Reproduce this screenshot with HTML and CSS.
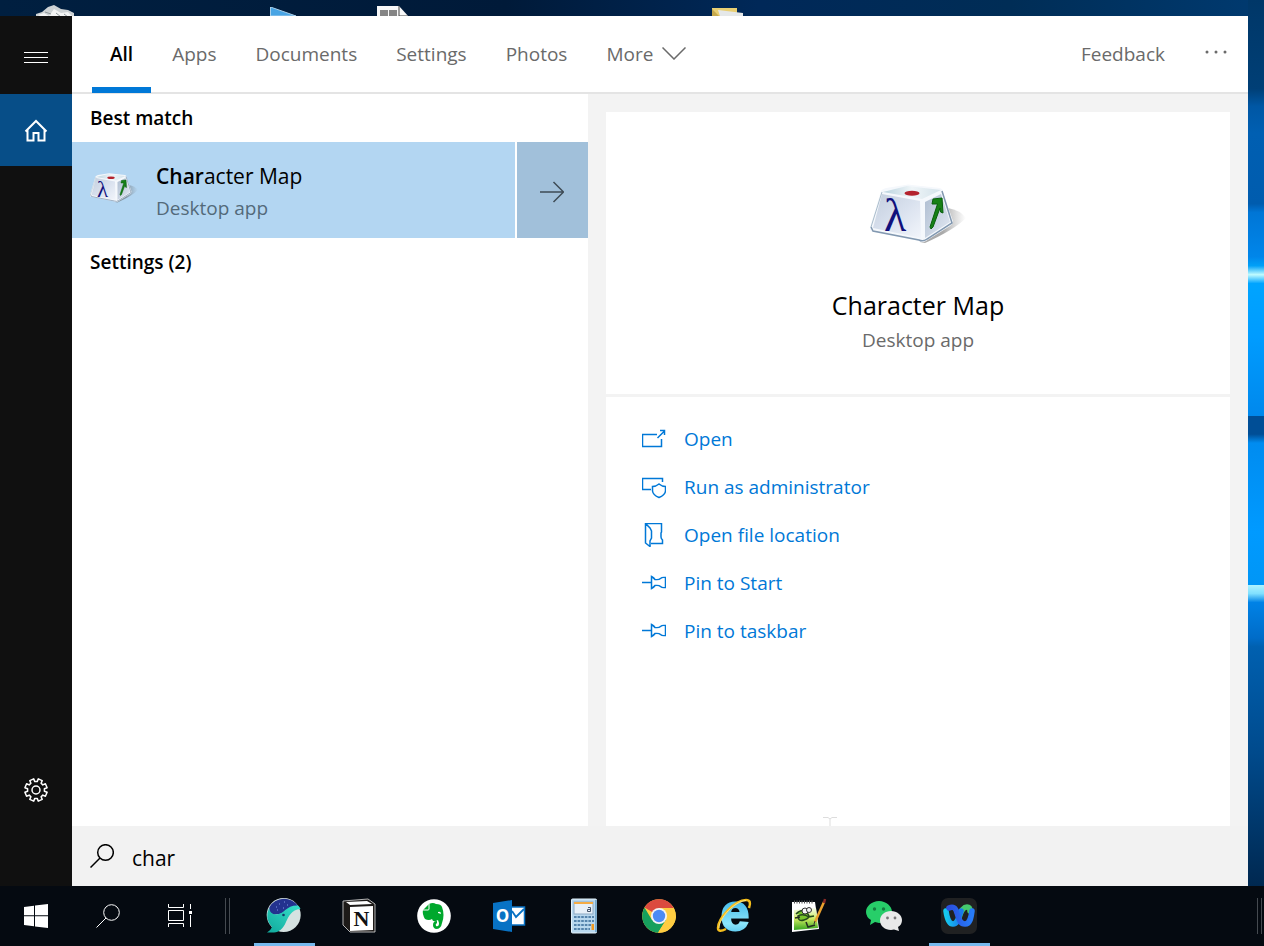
FILE: index.html
```
<!DOCTYPE html>
<html lang="en">
<head>
    <meta charset="UTF-8">
    <meta name="viewport" content="width=device-width, initial-scale=1.0">
    <title>Search</title>
    <link rel="stylesheet" href="styles.css">
</head>
<body>
    <!-- shared icons -->
    <svg class="sprite" width="0" height="0" aria-hidden="true">
        <defs>
            <linearGradient id="keyFront" x1="0" y1="0" x2="1" y2="1">
                <stop offset="0" stop-color="#c3cedd"/>
                <stop offset="0.5" stop-color="#d9e1ee"/>
                <stop offset="1" stop-color="#f2f5fb"/>
            </linearGradient>
            <linearGradient id="keySide" x1="0" y1="0" x2="1" y2="1">
                <stop offset="0" stop-color="#aebdd0"/>
                <stop offset="1" stop-color="#e4eaf4"/>
            </linearGradient>
            <linearGradient id="keyTop" x1="0" y1="0" x2="1" y2="0">
                <stop offset="0" stop-color="#b9d3de"/>
                <stop offset="0.5" stop-color="#eff5f8"/>
                <stop offset="1" stop-color="#d3e2ea"/>
            </linearGradient>
            <linearGradient id="keyShadow" x1="0" y1="0" x2="1" y2="0">
                <stop offset="0.5" stop-color="#555" stop-opacity="0.5"/>
                <stop offset="1" stop-color="#777" stop-opacity="0"/>
            </linearGradient>
        </defs>
        <symbol id="keycap" viewBox="0 0 96 60">
            <path d="M50 58 L78 24 Q90 26 96 34 Q84 46 55 59Z" fill="url(#keyShadow)"/>
            <path d="M11 7 Q12 5 16 4 L35 1 Q38 0 42 1 L70 4 Q73 5 73 8 L83 37 Q83 40 80 42 L56 57 Q53 59 49 57 L3 48 Q-1 47 0 43Z" fill="#f5f8fc"/>
            <path d="M12 10 L50 17 L51 54 L3 44Z" fill="url(#keyFront)"/>
            <path d="M55 18 L71 10 L80 38 L55 54Z" fill="url(#keySide)"/>
            <path d="M13 8 L37 2 L71 6 L52 15Z" fill="url(#keyTop)"/>
            <path d="M1 43 L3 47 L49 56 Q53 58 57 55 L82 39 L72 7" fill="none" stroke="#8298b0" stroke-width="1.500"/>
            <path d="M1 43 L12 8" fill="none" stroke="#a9bccb"/>
            <ellipse cx="42" cy="9.300" rx="7.500" ry="2.500" fill="#b4232e"/>
            <path d="M60 43 L67.500 20 L62 20 L63 15 L72 14 L73 29 L70.500 28 L70 24 L63 43 L61 45Z" fill="#168016" stroke="#075e0b"/>
        </symbol>
        <symbol id="pin" viewBox="0 0 24 24">
            <path d="M0 11.500H9.500M9.500 5.500V17.500Q12 16 13 14.500Q17 14 18.500 15.500Q20 17 23.500 16.500V6.500Q20 6 18.500 7.500Q17 9 13 8.500Q12 7 9.500 5.500Z"/>
        </symbol>
        <symbol id="magnifier" viewBox="0 0 24 24">
            <circle cx="15.500" cy="8.500" r="7.800"/>
            <path d="M10 14L.5 23.500"/>
        </symbol>
    </svg>

    <div class="desktop">
        <svg class="desktop-icon bin" width="40" height="16" viewBox="0 0 40 16" aria-hidden="true">
            <path d="M0 9L6 7L12 2L18 0L25 4L32 5L38 8V16H0Z" fill="#cdd2d4"/>
            <path d="M2 10L8 8L13 11L18 4L25 8L32 7L36 11L30 14L20 11L10 14Z" fill="#f3f4f4"/>
            <path d="M9 7L15 9M20 8L25 12M28 9L32 12" stroke="#8d9598"/>
        </svg>
        <svg class="desktop-icon media" width="26" height="9" viewBox="0 0 26 9" aria-hidden="true">
            <path d="M.5 0L26 9H.5Z" fill="#48a4e4" stroke="#a8cfea"/>
        </svg>
        <svg class="desktop-icon sheet" width="33" height="11" viewBox="0 0 33 11" aria-hidden="true">
            <path d="M0 0H22L32 11H0Z" fill="#f8f8f8"/>
            <path d="M3 4H11V11H3ZM12 4H20V11H12Z" fill="#858585"/>
            <path d="M22 0V10H31" fill="none" stroke="#444"/>
        </svg>
        <svg class="desktop-icon folder" width="32" height="8" viewBox="0 0 32 8" aria-hidden="true">
            <path d="M0 0H25V8H0Z" fill="#e9cf73"/>
            <path d="M6 2L31 5V8H8Z" fill="#e5e8e9"/>
            <path d="M0 1L7 8H0Z" fill="#c6a94d"/>
        </svg>

        <div class="search-panel">
            <nav class="rail">
                <button class="rail-button menu" aria-label="Menu">
                    <svg width="24" height="12" viewBox="0 0 24 12"><path d="M0 .5H24M0 5.500H24M0 10.500H24"/></svg>
                </button>
                <button class="rail-button home" aria-label="Home">
                    <svg width="24" height="24" viewBox="0 0 24 24"><path d="M1.500 12.500L12 2L22.500 12.500M3.500 11V21.500H9.500V14H14.500V21.500H20.500V11"/></svg>
                </button>
                <button class="rail-button settings" aria-label="Settings">
                    <svg width="24" height="24" viewBox="0 0 24 24">
                        <circle cx="12" cy="12" r="4"/>
                        <path d="M20.400 13.200L23.100 14.300L21.400 18.200L18.800 17.100L17.100 18.800L18.200 21.400L14.300 23.100L13.200 20.400H10.800L9.700 23.100L5.800 21.400L6.900 18.800L5.200 17.100L2.600 18.200L.9 14.300L3.600 13.200V10.800L.9 9.700L2.600 5.800L5.200 6.900L6.900 5.200L5.800 2.600L9.700 .9L10.800 3.600H13.200L14.300 .9L18.200 2.600L17.100 5.200L18.800 6.900L21.400 5.800L23.100 9.700L20.400 10.800Z" stroke-linejoin="round"/>
                    </svg>
                </button>
            </nav>

            <main class="search-main">
                <header class="tabs">
                    <button class="tab active">All</button>
                    <button class="tab">Apps</button>
                    <button class="tab">Documents</button>
                    <button class="tab">Settings</button>
                    <button class="tab">Photos</button>
                    <button class="tab more">More
                        <svg width="24" height="13" viewBox="0 0 24 13"><path d="M.5 .5L12 12L23.500 .5"/></svg>
                    </button>
                    <button class="tab feedback">Feedback</button>
                    <button class="options" aria-label="Options">
                        <svg width="24" height="4" viewBox="0 0 24 4"><circle cx="3" cy="2" r="1.500"/><circle cx="12" cy="2" r="1.500"/><circle cx="21" cy="2" r="1.500"/></svg>
                    </button>
                </header>

                <div class="content">
                    <section class="results">
                        <h2 class="group-title">Best match</h2>
                        <div class="result">
                            <button class="result-item">
                                <svg class="result-icon" width="48" height="30" viewBox="0 0 96 60">
                                    <use href="#keycap"/>
                                    <text class="key-letter" x="14" y="47">λ</text>
                                </svg>
                                <span class="result-text">
                                    <span class="result-name"><b>Char</b>acter Map</span>
                                    <span class="subtitle">Desktop app</span>
                                </span>
                            </button>
                            <button class="result-expand" aria-label="Show details">
                                <svg width="24" height="22" viewBox="0 0 24 22"><path d="M0 11H23.500M13.500 1L23.500 11L13.500 21"/></svg>
                            </button>
                        </div>
                        <h2 class="group-title">Settings (2)</h2>
                    </section>

                    <section class="details">
                        <div class="card app-card">
                            <svg class="app-icon" width="96" height="60" viewBox="0 0 96 60">
                                <use href="#keycap"/>
                                <text class="key-letter" x="14" y="47">λ</text>
                            </svg>
                            <h1 class="app-name">Character Map</h1>
                            <span class="subtitle">Desktop app</span>
                        </div>
                        <div class="card actions">
                            <button class="action">
                                <svg width="24" height="24" viewBox="0 0 24 24"><path d="M15 7.500H.5V19.500H19.500V12M15.500 11L22.500 4M18 3.500H22.500V8"/></svg>
                                Open
                            </button>
                            <button class="action">
                                <svg width="24" height="24" viewBox="0 0 24 24"><path d="M9 14.500H.5V3.500H20.500V7M17 9Q14 11.500 10.500 11.500V16Q11 20 17 22.500Q23 20 23.500 16V11.500Q20 11.500 17 9Z"/></svg>
                                Run as administrator
                            </button>
                            <button class="action">
                                <svg width="24" height="24" viewBox="0 0 24 24"><path d="M9 20.500H20.500V17Q19 15.500 19 14V10L19.500 9V.5H3.500V20L8 23.500V18L9.500 15V8L8 5L3.500 .5"/></svg>
                                Open file location
                            </button>
                            <button class="action">
                                <svg width="24" height="24"><use href="#pin"/></svg>
                                Pin to Start
                            </button>
                            <button class="action">
                                <svg width="24" height="24"><use href="#pin"/></svg>
                                Pin to taskbar
                            </button>
                            <svg class="text-cursor" width="14" height="9" viewBox="0 0 14 9" aria-hidden="true"><path d="M0 .5H5L7 2L9 .5H14M7 2V9"/></svg>
                        </div>
                    </section>
                </div>

                <label class="search-box">
                    <svg width="24" height="24"><use href="#magnifier"/></svg>
                    <input type="text" value="char" aria-label="Search">
                </label>
            </main>
        </div>
    </div>

    <footer class="taskbar">
        <button class="system-button" aria-label="Start">
            <svg width="24" height="24" viewBox="0 0 24 24"><path d="M0 3L10 1.700V11.300H0ZM11 1.500L24 0V11.300H11ZM0 12.300H10V22.300L0 21ZM11 12.300H24V24L11 22.400Z" fill="#fff"/></svg>
        </button>
        <button class="system-button" aria-label="Search">
            <svg class="line" width="24" height="24"><use href="#magnifier"/></svg>
        </button>
        <button class="system-button" aria-label="Task View">
            <svg class="line" width="24" height="24" viewBox="0 0 24 24"><path d="M.5 0V3.500H15.500V0M.5 6.500H15.500V16.500H.5ZM.5 23V19.500H15.500V23M22.500 0V5M22.500 11V23"/><path d="M21 7H24V10H21Z" fill="#fff" stroke="none"/></svg>
        </button>
        <span class="grip"></span>

        <div class="apps">
            <button class="app running" aria-label="Whale">
                <svg width="36" height="36" viewBox="0 0 36 36">
                    <defs><linearGradient id="whale" x1="0" y1="1" x2="1" y2="0"><stop offset="0" stop-color="#10a99c"/><stop offset="1" stop-color="#38e0cb"/></linearGradient></defs>
                    <circle cx="17.700" cy="17" r="17" fill="#d5e2e1"/>
                    <path d="M3.500 9A17 17 0 0 1 32 8L20 15L6 17Q2 14 3.500 9Z" fill="#23328f"/>
                    <path d="M3 10Q4 16 10 16.500C19 16 20 7 32 7.500Q34 9 34.500 11C25 12 23 18 20 24C17 31 13 34 8 34.500H1Q5 32 6 29Q-2 21 3 10Z" fill="url(#whale)"/>
                    <circle cx="17.500" cy="17" r="1.300" fill="#123a66"/>
                    <path d="M10 9h1M18 4h1M21 7h1M13 6h1M11 12h1M17 10h1" stroke="#8396e6"/>
                </svg>
            </button>
            <button class="app" aria-label="Notion">
                <svg width="36" height="36" viewBox="0 0 36 36">
                    <path d="M2 3L27 1L34 6V34H9L2 27Z" fill="#1d1a18" stroke="#ddd" stroke-width="0.800"/>
                    <path d="M5 4L26 3L31 6L9 7Z" fill="#fff"/>
                    <path d="M9 9L32 8V32L9 33Z" fill="#fff"/>
                    <text class="logo-n" x="20.500" y="28">N</text>
                </svg>
            </button>
            <button class="app" aria-label="Evernote">
                <svg width="36" height="36" viewBox="0 0 36 36">
                    <circle cx="18" cy="18" r="16.800" fill="#fff"/>
                    <path d="M7 12L13 6Q17 4 20 6Q25 6 26 9Q29 17 26 25Q25 31 20 31Q17 30 17 27Q17 23 21 23V25Q19 26 20 28Q23 29 23 25L22 22Q17 25 16 21Q13 23 9 21Q6 16 7 12Z" fill="#00a82d"/>
                    <path d="M7 12H12Q13 12 13 11V6" fill="none" stroke="#fff"/>
                    <path d="M22 14Q25 13 25 16L22 15Z" fill="#fff"/>
                </svg>
            </button>
            <button class="app" aria-label="Outlook">
                <svg width="36" height="36" viewBox="0 0 36 36">
                    <path d="M20 9H33.500V27H20Z" fill="#fff" stroke="#0872c4" stroke-width="1.500"/>
                    <path d="M21 13L25 19L33 11" fill="none" stroke="#0872c4" stroke-width="1.800"/>
                    <path d="M2 5L21 2V34L2 31Z" fill="#0872c4"/>
                    <text class="logo-o" x="11.500" y="24">O</text>
                </svg>
            </button>
            <button class="app" aria-label="Calculator">
                <svg width="36" height="36" viewBox="0 0 36 36">
                    <rect x="5.500" y="1" width="25" height="34" rx="1" fill="#b9d8ee" stroke="#e4f2fb"/>
                    <path d="M30 2V34" stroke="#6097bf" stroke-width="1.500"/>
                    <rect x="8" y="4" width="19" height="12" fill="#e7f0f8" stroke="#8daac4"/>
                    <path d="M8 5H27" stroke="#f4ac45" stroke-width="2"/>
                    <path d="M22 9.500H24.500V13.500H21.500V11.500H24.500" fill="none" stroke="#44546b"/>
                    <path d="M8 19H28M8 23H28M8 27H28M8 31H24" stroke="#5584ac" stroke-width="2.200" stroke-dasharray="2.600 1"/>
                    <path d="M25.500 26H28V32H25.500Z" fill="#f29a20"/>
                </svg>
            </button>
            <button class="app" aria-label="Chrome">
                <svg width="36" height="36" viewBox="0 0 36 36">
                    <circle cx="18" cy="18" r="16.800" fill="#ffcd42"/>
                    <path d="M18 18L3.500 9.500A16.800 16.800 0 0 1 32.800 10H18Z" fill="#db4a3f"/>
                    <path d="M3.500 9.500A16.800 16.800 0 0 0 17 34.800L25 22L18 18L11 22Z" fill="#16a05d"/>
                    <path d="M18 10H32.800A16.800 16.800 0 0 1 17 34.800L25 22Z" fill="#ffcd42"/>
                    <circle cx="18" cy="18" r="8" fill="#f4f4f4"/>
                    <circle cx="18" cy="18" r="6.200" fill="#4c8bf5"/>
                </svg>
            </button>
            <button class="app" aria-label="Internet Explorer">
                <svg width="36" height="36" viewBox="0 0 36 36">
                    <defs><linearGradient id="ie" x1="0" y1="0" x2="0" y2="1"><stop offset="0.300" stop-color="#43b9ea"/><stop offset="0.700" stop-color="#8be5fb"/><stop offset="1" stop-color="#35b3e8"/></linearGradient></defs>
                    <text class="logo-e" x="19" y="32" fill="url(#ie)" stroke="url(#ie)">e</text>
                    <path d="M10 31Q2 35 2 30C2 20 19 2 30 2Q36 2 33 10" fill="none" stroke="#f4bd1c" stroke-width="2.500"/>
                    <path d="M3 30C3 20 19 3 30 2.500" fill="none" stroke="#fff0a0" stroke-width="0.800"/>
                </svg>
            </button>
            <button class="app" aria-label="Notepad++">
                <svg width="36" height="36" viewBox="0 0 36 36">
                    <defs><linearGradient id="npp" x1="0" y1="0" x2="0" y2="1"><stop offset="0" stop-color="#f7fbea"/><stop offset="0.500" stop-color="#cbe95f"/><stop offset="1" stop-color="#35a51f"/></linearGradient></defs>
                    <path d="M1 4H24L28 31L1 34Z" fill="#fff"/>
                    <path d="M3 12L25 10L27 30L3 32Z" fill="url(#npp)"/>
                    <path d="M3 4H23" stroke="#555" stroke-width="3" stroke-dasharray="1 1.500"/>
                    <path d="M5 16Q12 9 17 16Q20 20 13 22Q7 24 7 18Q12 15 18 19L23 18" fill="#77c52b" stroke="#24481b" stroke-width="1.500"/>
                    <circle cx="14" cy="13" r="3" fill="#f4f4f4" stroke="#333"/><circle cx="18" cy="12" r="2.500" fill="#f4f4f4" stroke="#333"/>
                    <path d="M15 24L17 29L24 27M4 20L9 19" fill="none" stroke="#252d21" stroke-width="1.500"/>
                    <path d="M33 4L24 24" stroke="#eaa12e" stroke-width="2.500"/><path d="M34 1L33 5" stroke="#8b2a27" stroke-width="2.500"/><path d="M24 23L23 26" stroke="#333"/>
                </svg>
            </button>
            <button class="app" aria-label="WeChat">
                <svg width="36" height="36" viewBox="0 0 36 36">
                    <path d="M13 3C20 3 26 8 26 14C26 20 20 25 13 25L9 24L4 27L5 22Q0 19 0 14C0 8 6 3 13 3Z" fill="#27ce69"/>
                    <circle cx="8.500" cy="11" r="1.700" fill="#157e42"/><circle cx="17.500" cy="11" r="1.700" fill="#157e42"/>
                    <path d="M25 13C31 13 36 17 36 22Q36 27 32 29L33 33L28 31.500L25 32C19 32 14 28 14 22.500S19 13 25 13Z" fill="#e9e9e9"/>
                    <circle cx="21.500" cy="20" r="1.400" fill="#777"/><circle cx="29" cy="20" r="1.400" fill="#777"/>
                </svg>
            </button>
            <button class="app running" aria-label="Webex">
                <svg width="36" height="36" viewBox="0 0 36 36">
                    <defs>
                        <linearGradient id="wbLeft"><stop offset="0" stop-color="#15c9ee"/><stop offset="1" stop-color="#1878ee"/></linearGradient>
                        <linearGradient id="wbRight"><stop offset="0" stop-color="#2a4fe0"/><stop offset="1" stop-color="#277bf6"/></linearGradient>
                    </defs>
                    <rect width="36" height="36" rx="7" fill="#202122"/>
                    <path d="M18 20Q21 9 26 9Q29 9 29 13" fill="none" stroke="#45c96e" stroke-width="5.500" stroke-linecap="round"/>
                    <path d="M5 13C6 20 8 26 12 26C17 26 18 18 20 13" fill="none" stroke="url(#wbLeft)" stroke-width="5.500" stroke-linecap="round"/>
                    <path d="M8 10Q14 7 16 15C18 21 19 26 24 26C29 26 30 20 31 13" fill="none" stroke="url(#wbRight)" stroke-width="5.500" stroke-linecap="round"/>
                </svg>
            </button>
        </div>
        <span class="grip grip-end"></span>
    </footer>
</body>
</html>
```
FILE: styles.css
```
* {
    box-sizing: border-box;
}

body {
    font-family: "Open Sans", "Noto Sans", sans-serif;
    font-size: 19px;
    line-height: 24px;
    display: flex;
    flex-direction: column;
    min-height: 100vh;
    margin: 0;
    color: #000;
    background: #050a11;
}

button {
    font: inherit;
    color: inherit;
    background: none;
    border: 0;
    padding: 0;
    cursor: pointer;
}

svg {
    display: block;
    flex: none;
    fill: none;
}

.sprite {
    position: absolute;
}

/* Wallpaper */
.desktop {
    position: relative;
    flex: 1;
    display: flex;
    padding: 16px 16px 0 0;
    background:
        linear-gradient(#003768 0%, #003f76 10%, #0057a4 12%, #005fb2 15%, #005cae 23%, #0076d6 24%, #0086ea 29%, #00a0f8 30%, #c0fbff 31%, #00a4ff 32%, #009cff 38%, #0088ec 47%, #004e96 47%, #004e96 49%, #008cf0 50%, #009aff 60%, #0096f6 66%, #b0f4ff 66%, #80e0ff 67%, #0082e6 68%, #006cc8 72%, #0060b0 73%, #004a8c 85%, #002850 100%) right / 16px 100% no-repeat,
        linear-gradient(90deg, #001f40, #001a39 40%, #002858 60%, #002d56 80%, #003a70);
}

.desktop-icon {
    position: absolute;
}

.bin {
    left: 36px;
    top: 5px;
}

.media {
    left: 270px;
    top: 7px;
}

.sheet {
    left: 377px;
    top: 6px;
}

.folder {
    left: 712px;
    top: 8px;
}

.search-panel {
    position: relative;
    flex: 1;
    display: flex;
    background: #fff;
}

/* Left rail */
.rail {
    flex: 0 0 72px;
    display: flex;
    flex-direction: column;
    background: #101010;
}

.rail-button {
    display: flex;
    align-items: center;
    justify-content: center;
    height: 72px;
    stroke: #fff;
}

.menu {
    height: 78px;
    padding-top: 6px;
}

.home {
    padding-top: 2px;
    background: #074e88;
    stroke-width: 2;
}

.settings {
    margin-top: auto;
    margin-bottom: 60px;
    stroke-width: 1.5;
}

.search-main {
    flex: 1;
    min-width: 0;
    display: flex;
    flex-direction: column;
}

/* Tabs */
.tabs {
    display: flex;
    gap: 3px;
    height: 78px;
    padding: 0 20px;
    border-bottom: 2px solid #e4e4e4;
}

.tab {
    margin-bottom: -1px;
    padding: 4px 18px 0;
    color: #6a6a6a;
    border-bottom: 6px solid transparent;
}

.tab.active {
    color: #000;
    font-weight: 600;
    border-bottom-color: #0078d7;
}

.more {
    display: flex;
    align-items: center;
    gap: 9px;
    stroke: #6a6a6a;
    stroke-width: 1.5;
}

.feedback {
    margin-left: auto;
}

.options {
    padding: 0 0 4px 18px;
}

.options svg {
    fill: #6a6a6a;
}

/* Results */
.content {
    flex: 1;
    display: flex;
}

.results {
    flex: 0 0 516px;
}

.group-title {
    margin: 0;
    padding: 12px 18px;
    font-size: 19px;
    font-weight: 600;
}

.result {
    display: flex;
    gap: 2px;
    height: 96px;
}

.result-item {
    flex: 1;
    display: flex;
    align-items: center;
    gap: 18px;
    padding: 0 18px;
    text-align: left;
    background: #b3d6f2;
}

.result-icon {
    margin-bottom: 4px;
}

.result-text {
    display: flex;
    flex-direction: column;
}

.result-name {
    font-size: 21px;
    line-height: 36px;
}

.result-name b {
    font-weight: 600;
}

.subtitle {
    color: #6a6a6a;
}

.result-item .subtitle {
    color: #536a7a;
    line-height: 28px;
}

.result-expand {
    display: flex;
    align-items: center;
    justify-content: center;
    width: 71px;
    padding: 4px 2px 0 0;
    background: #a1c0da;
    stroke: #3e4b55;
    stroke-width: 1.5;
}

/* Details */
.details {
    flex: 1;
    display: flex;
    flex-direction: column;
    gap: 3px;
    padding: 18px 18px 0;
    background: #f3f3f3;
}

.card {
    background: #fff;
}

.app-card {
    display: flex;
    flex-direction: column;
    align-items: center;
    height: 282px;
    padding-top: 72px;
}

.app-name {
    margin: 42px 0 4px;
    font-size: 25px;
    font-weight: 400;
    line-height: 38px;
}

.actions {
    position: relative;
    flex: 1;
    padding: 18px 36px;
}

.action {
    display: flex;
    align-items: center;
    gap: 18px;
    height: 48px;
    color: #0078d7;
}

.action svg {
    stroke: #0078d7;
    stroke-width: 1.5;
}

.text-cursor {
    position: absolute;
    left: 217px;
    bottom: 0;
    stroke: #ddd;
}

/* Search box */
.search-box {
    display: flex;
    align-items: center;
    gap: 18px;
    height: 60px;
    padding: 0 18px;
    background: #f2f2f2;
    stroke: #000;
    stroke-width: 1.5;
}

.search-box input {
    flex: 1;
    min-width: 0;
    height: 36px;
    padding: 4px 0 0;
    font: inherit;
    font-size: 21px;
    border: 0;
    outline: 0;
    background: none;
}

/* Taskbar */
.taskbar {
    display: flex;
    align-items: center;
    height: 60px;
    background: #050a11;
}

.system-button {
    display: flex;
    align-items: center;
    justify-content: center;
    width: 72px;
    height: 60px;
}

.line {
    stroke: #fff;
}

.grip {
    width: 5px;
    height: 36px;
    margin: 0 24px 0 9px;
    border: solid #454a50;
    border-width: 0 1px;
}

.grip-end {
    margin: 0 2px 0 auto;
}

.apps {
    display: flex;
    gap: 14px;
}

.app {
    display: flex;
    align-items: center;
    justify-content: center;
    width: 61px;
    height: 60px;
    padding-right: 1px;
    border: solid transparent;
    border-width: 3px 0;
}

.app svg {
    overflow: visible;
}

.app.running {
    border-bottom-color: #76b9ed;
}

/* Letters inside the logos */
.key-letter {
    font: 46px "Liberation Serif", serif;
    fill: #10107c;
}

.logo-n {
    font: bold 22px "Liberation Serif", serif;
    text-anchor: middle;
    fill: #111;
}

.logo-o {
    font: bold 17px "Open Sans", sans-serif;
    text-anchor: middle;
    fill: #fff;
}

.logo-e {
    font: bold 52px "Liberation Sans", sans-serif;
    text-anchor: middle;
    stroke-width: 2;
}
```
